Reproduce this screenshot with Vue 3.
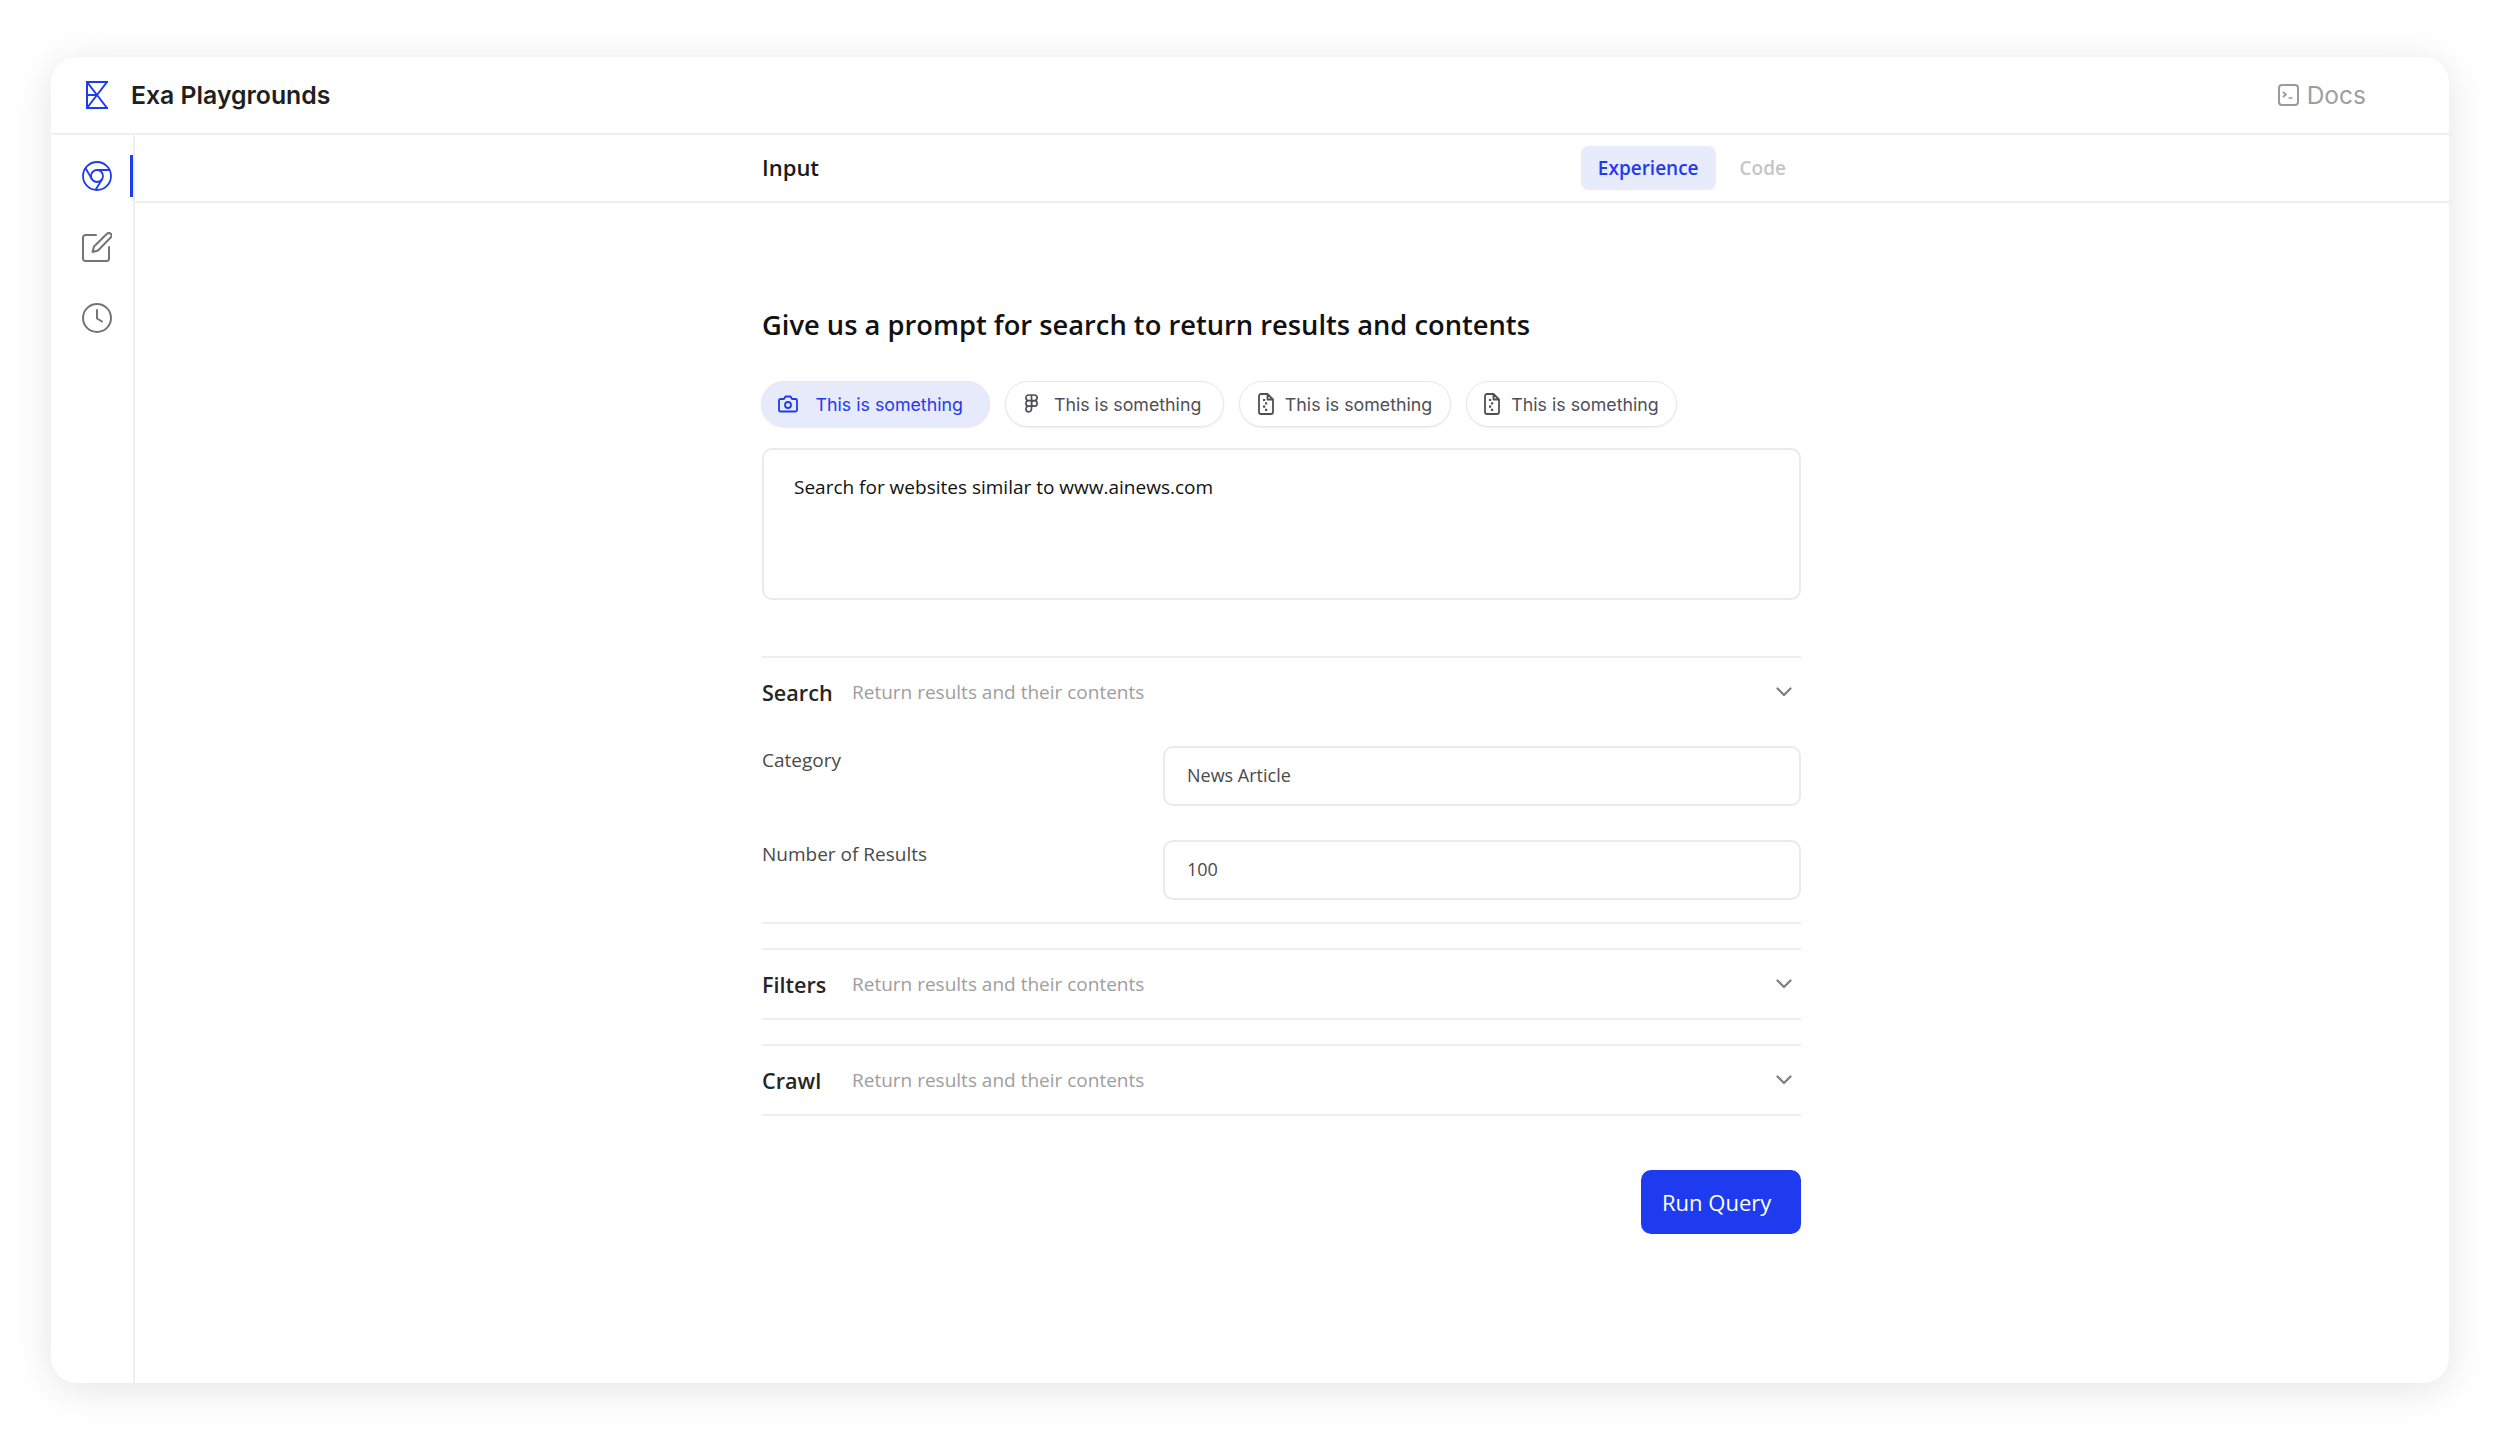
<script setup>
const pills = [
  { icon: 'camera', active: true },
  { icon: 'figma' },
  { icon: 'file' },
  { icon: 'file' },
]
const sections = [
  { name: 'Search', open: true },
  { name: 'Filters' },
  { name: 'Crawl' },
]
const fields = [
  { label: 'Category', value: 'News Article' },
  { label: 'Number of Results', value: '100' },
]
</script>

<template>
  <div class="page">
    <div class="card">
      <header class="top">
        <div class="brand">
          <svg class="logo" viewBox="0 0 22 28" fill="none" stroke="#1f3bf0" stroke-width="2">
            <path d="M22 1H1V27H22M1 1L21 27M21 1L1 27M1 14H11" stroke-linejoin="miter" />
          </svg>
          <span class="brand-name">Exa Playgrounds</span>
        </div>
        <div class="docs">
          <svg class="docs-icon" viewBox="0 0 21 22" fill="none" stroke="#9a9a9a" stroke-width="2">
            <rect x="1" y="1" width="19" height="20" rx="3" />
            <path d="M5 8l3 2.500L5 13M10.500 14h4" stroke-linejoin="round" stroke-width="1.700" />
          </svg>
          <span>Docs</span>
        </div>
      </header>
      <div class="body">
        <nav class="side">
          <div class="side-item side-active">
            <svg class="side-icon" viewBox="0 0 30 30" fill="none" stroke="#1f3bf0" stroke-width="1.800">
              <circle cx="15" cy="15" r="14" />
              <circle cx="15" cy="15" r="6" />
              <path d="M15 9H28M9.800 18L3.500 7M20.200 18L13.500 29" />
            </svg>
          </div>
          <div class="side-item">
            <svg class="side-icon" viewBox="0 0 30 30" fill="none" stroke="#747474" stroke-width="2" stroke-linecap="round" stroke-linejoin="round">
              <path d="M14 3H3.500A2.500 2.500 0 0 0 1 5.500V26.500A2.500 2.500 0 0 0 3.500 29H24.500A2.500 2.500 0 0 0 27 26.500V15" />
              <path d="M25 1.800a2.600 2.600 0 0 1 3.700 3.700L16 18.500L10.500 20L12 14.500Z" />
            </svg>
          </div>
          <div class="side-item">
            <svg class="side-icon" viewBox="0 0 30 30" fill="none" stroke="#747474" stroke-width="2" stroke-linecap="round" stroke-linejoin="round">
              <circle cx="15" cy="15" r="14" />
              <path d="M15 7V15.500L20 18.500" />
            </svg>
          </div>
        </nav>
        <main class="main">
          <div class="subhead">
            <div class="subhead-inner">
              <span class="input-title">Input</span>
              <div class="tabs">
                <span class="tab tab-active">Experience</span>
                <span class="tab">Code</span>
              </div>
            </div>
          </div>
          <div class="content">
            <h1 class="heading">Give us a prompt for search to return results and contents</h1>
            <div class="pills">
              <div v-for="(p, i) in pills" :key="i" class="pill" :class="{ 'pill-active': p.active, ['pill-' + p.icon]: true }">
                <svg v-if="p.icon === 'camera'" class="icon-camera" viewBox="0 0 20 20" fill="none" stroke="currentColor" stroke-width="1.800" stroke-linejoin="round">
                  <path d="M2.500 5H6L7.500 2.500H12.500L14 5H17.500A1.500 1.500 0 0 1 19 6.500V16A1.500 1.500 0 0 1 17.500 17.500H2.500A1.500 1.500 0 0 1 1 16V6.500A1.500 1.500 0 0 1 2.500 5Z" />
                  <circle cx="10" cy="11" r="3" />
                </svg>
                <svg v-else-if="p.icon === 'figma'" class="icon-figma" viewBox="0 0 13 20" fill="none" stroke="currentColor" stroke-width="1.700" stroke-linejoin="round">
                  <path d="M6.500 1H3.700a2.800 2.800 0 0 0 0 5.600H6.500ZM6.500 1H9.300a2.800 2.800 0 0 1 0 5.600H6.500ZM6.500 6.600H3.700a2.800 2.800 0 0 0 0 5.600H6.500ZM6.500 12.200H3.700a2.800 2.800 0 1 0 2.800 2.800ZM12.100 9.400a2.800 2.800 0 1 1-5.600 0a2.800 2.800 0 0 1 5.600 0Z" />
                </svg>
                <svg v-else class="icon-file" viewBox="0 0 16 22" fill="none" stroke="currentColor" stroke-width="1.800" stroke-linejoin="round">
                  <path d="M9.500 1H3A2 2 0 0 0 1 3V19A2 2 0 0 0 3 21H13A2 2 0 0 0 15 19V6.500ZM9.500 1V6.500H15" />
                  <path d="M5 7H7.200M7 10.300H9.200M5 13.600H7.200M7 16.900H9.200" stroke-width="2.200" />
                </svg>
                <span>This is something</span>
              </div>
            </div>
            <div class="prompt">Search for websites similar to www.ainews.com</div>
            <section v-for="s in sections" :key="s.name" class="section" :class="{ 'section-open': s.open }">
              <div class="section-head">
                <span class="section-name">{{ s.name }}</span>
                <span class="section-sub">Return results and their contents</span>
                <svg class="chev" viewBox="0 0 16 10" fill="none" stroke="#7d7d7d" stroke-width="2.200" stroke-linecap="round" stroke-linejoin="round">
                  <path d="M1.500 1.500L8 8L14.500 1.500" />
                </svg>
              </div>
              <div v-if="s.open" class="fields">
                <div v-for="f in fields" :key="f.label" class="field">
                  <label class="field-label">{{ f.label }}</label>
                  <div class="field-input">{{ f.value }}</div>
                </div>
              </div>
            </section>
            <div class="actions">
              <button class="run">Run Query</button>
            </div>
          </div>
        </main>
      </div>
    </div>
  </div>
</template>

<style>
html, body { margin: 0; background: #fff; }
</style>

<style scoped>
* { box-sizing: border-box; }
.page {
  width: 2500px;
  height: 1440px;
  padding: 57px 51px;
  font-family: "Open Sans", sans-serif;
  overflow: hidden;
}
.card {
  width: 2398px;
  height: 1326px;
  background: #fff;
  border-radius: 26px;
  box-shadow: 0 6px 40px rgba(0, 0, 0, 0.11);
  display: flex;
  flex-direction: column;
  overflow: hidden;
}
.top {
  height: 78px;
  flex: none;
  border-bottom: 2px solid #efefef;
  display: flex;
  align-items: center;
  justify-content: space-between;
  padding: 0 83px 0 35px;
}
.brand { display: flex; align-items: center; gap: 23px; }
.logo { width: 22px; height: 28px; display: block; }
.brand-name {
  font-family: Inter, sans-serif;
  font-weight: 600;
  font-size: 24.800px;
  color: #1f1f1f;
}
.docs {
  display: flex;
  align-items: center;
  gap: 8px;
  font-family: Inter, sans-serif;
  font-size: 24.500px;
  color: #9e9e9e;
}
.docs-icon { width: 21px; height: 22px; display: block; }
.body { flex: 1; display: flex; min-height: 0; }
.side {
  width: 84px;
  flex: none;
  border-right: 2px solid #efeff2;
  padding-top: 20px;
  display: flex;
  flex-direction: column;
  gap: 29px;
}
.side-item {
  position: relative;
  height: 42px;
  display: flex;
  align-items: center;
  padding-left: 31px;
}
.side-active::after {
  content: "";
  position: absolute;
  right: 0;
  top: 0;
  width: 3px;
  height: 42px;
  background: #1f3bf0;
}
.side-icon { width: 30px; height: 30px; display: block; }
.main { flex: 1; min-width: 0; }
.subhead { height: 68px; border-bottom: 2px solid #efefef; padding: 11px 0 0 627px; }
.subhead-inner {
  width: 1039px;
  display: flex;
  align-items: center;
  justify-content: space-between;
  height: 44px;
}
.input-title { font-weight: 600; font-size: 22px; line-height: 42px; height: 44px; color: #1a1a1a; }
.tabs { display: flex; align-items: center; gap: 8px; }
.tab {
  height: 44px;
  padding: 0 15px 1px 16px;
  border-radius: 8px;
  display: flex;
  align-items: center;
  font-weight: 600;
  font-size: 19px;
  color: #c6c6c6;
}
.tab-active { background: #e8ebfb; color: #1f3bf0; padding: 0 17px 1px; }
.content { width: 1666px; padding: 98px 0 0 627px; }
.heading {
  margin: 0;
  font-weight: 600;
  font-size: 27.300px;
  line-height: 48px;
  color: #111;
}
.pills { display: flex; gap: 15px; margin-top: 32px; margin-left: -1px; }
.pill {
  height: 46px;
  border-radius: 23px;
  border: 1.500px solid #e8e8e8;
  box-shadow: 0 1px 2px rgba(0, 0, 0, 0.07);
  display: flex;
  align-items: center;
  padding: 0 17.500px;
  gap: 11px;
  font-family: Inter, sans-serif;
  font-size: 17.800px;
  color: #4f4f57;
  background: #fff;
  white-space: nowrap;
}
.icon-camera { width: 20px; height: 20px; flex: none; }
.icon-figma { width: 13px; height: 20px; flex: none; }
.icon-file { width: 16px; height: 22px; flex: none; }
.pill-active {
  background: #e7eafb;
  border-color: #e4e7f5;
  color: #1f3bf0;
  gap: 17.500px;
  padding: 0 26px 0 16px;
}
.pill-figma { gap: 16px; padding: 0 22px 0 19px; }
.prompt {
  margin-top: 21px;
  height: 152px;
  border: 2px solid #ebebeb;
  border-radius: 10px;
  padding: 23px 30px;
  font-size: 19px;
  line-height: 28px;
  color: #111;
}
.section {
  margin-top: 24px;
  border-top: 2px solid #eeeeee;
  border-bottom: 2px solid #eeeeee;
}
.section:first-of-type { margin-top: 56px; }
.section-head {
  height: 68px;
  display: flex;
  align-items: center;
}
.section-name {
  width: 90px;
  flex: none;
  font-weight: 600;
  font-size: 21.600px;
  color: #262626;
}
.section-sub { flex: 1; font-size: 19px; color: #9e9e9e; }
.chev { width: 16px; height: 10px; margin-right: 9px; display: block; }
.fields { padding: 20px 0 22px; display: flex; flex-direction: column; gap: 34px; }
.field { display: flex; justify-content: space-between; }
.field-label { font-size: 19px; line-height: 28px; color: #4a4a4a; }
.field-input {
  width: 638px;
  height: 60px;
  border: 2px solid #ebebeb;
  border-radius: 10px;
  padding: 0 22px 2px;
  display: flex;
  align-items: center;
  font-size: 18px;
  color: #4a4a4a;
}
.actions { display: flex; justify-content: flex-end; margin-top: 54px; }
.run {
  width: 160px;
  height: 64px;
  border: none;
  border-radius: 10px;
  background: #1f3bf0;
  color: #fff;
  font-family: "Open Sans", sans-serif;
  font-size: 22px;
  text-align: left;
  padding: 0 0 0 21px;
}
</style>
